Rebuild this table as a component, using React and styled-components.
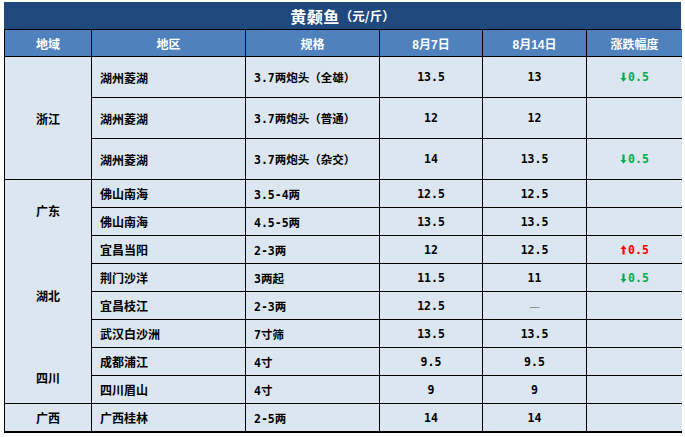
import styled, { createGlobalStyle } from "styled-components";

const GlobalStyle = createGlobalStyle`
  body {
    margin: 0;
    background: #fff;
    font-family: "Noto Sans CJK SC", sans-serif;
  }
`

const Page = styled.div`
  padding: 2px 0 0 4px;
`
const Title = styled.div`
  width: 677px;
  height: 27px;
  box-sizing: border-box;
  background-color: #1f497d;
  color: #fff;
  display: flex;
  align-items: center;
  justify-content: center;
  font-weight: bold;
  font-size: 16px;
  letter-spacing: 0.5px;
`
const Unit = styled.span`
  font-size: 12.5px;
  letter-spacing: 0;
`
const Table = styled.div`
  width: 677px;
  box-sizing: border-box;
  border-left: 1px solid #000;
  display: grid;
  grid-template-columns: 87px 154px 134px 103px 104px 95px;
  grid-template-rows: 28px 41px 41px 41px repeat(8, 28px) 29px;
`
const Head = styled.div`
  background-color: #4f81bd;
  color: #fff;
  font-family: "Liberation Sans", "Noto Sans CJK SC", sans-serif;
  font-weight: bold;
  font-size: 12px;
  display: flex;
  align-items: center;
  justify-content: center;
  border-top: 1px solid #000;
  border-bottom: 1px solid #000;
  border-right: ${p => (p.$last ? "none" : "1px solid #000")};
  padding-top: 1px;
`
const Cell = styled.div`
  background-color: #dce6f1;
  color: ${p => p.$color || "#000"};
  font-family: "DejaVu Sans Mono", "Noto Sans CJK SC", monospace;
  font-weight: bold;
  font-size: 11.5px;
  display: flex;
  align-items: center;
  justify-content: ${p => (p.$left ? "flex-start" : "center")};
  padding-left: ${p => (p.$left ? "8px" : "0")};
  grid-row: ${p => (p.$span ? `span ${p.$span}` : "auto")};
  border-right: ${p => (p.$last ? "none" : "1px solid #000")};
  border-bottom: ${p => (p.$open ? "none" : p.$end ? "2px solid #000" : "1px solid #000")};
  white-space: nowrap;
`
const Region = styled(Cell)`
  font-family: "Noto Sans CJK SC", sans-serif;
  font-size: 12px;
  padding-top: ${p => p.$pad || "0"};
`
const Name = styled.span`
  font-family: "Noto Sans CJK SC", sans-serif;
  font-size: 12px;
`
const Dash = styled.span`
  font-family: "Noto Sans CJK SC", sans-serif;
  font-weight: normal;
  color: #7f7f7f;
  font-size: 12px;
`
const Change = styled.span`
  display: inline-flex;
  align-items: center;
  gap: 1px;
`

const heads = ["地域", "地区", "规格", "8月7日", "8月14日", "涨跌幅度"];

const rows = [
  { region: "浙江", span: 3, place: "湖州菱湖", spec: "3.7两炮头（全雄）", a: "13.5", b: "13", diff: "down" },
  { place: "湖州菱湖", spec: "3.7两炮头（普通）", a: "12", b: "12" },
  { place: "湖州菱湖", spec: "3.7两炮头（杂交）", a: "14", b: "13.5", diff: "down" },
  { region: "广东", span: 2, open: true, pad: "4px", place: "佛山南海", spec: "3.5-4两", a: "12.5", b: "12.5" },
  { place: "佛山南海", spec: "4.5-5两", a: "13.5", b: "13.5" },
  { region: "湖北", span: 4, open: true, pad: "6px", place: "宜昌当阳", spec: "2-3两", a: "12", b: "12.5", diff: "up" },
  { place: "荆门沙洋", spec: "3两起", a: "11.5", b: "11", diff: "down" },
  { place: "宜昌枝江", spec: "2-3两", a: "12.5", b: null },
  { place: "武汉白沙洲", spec: "7寸筛", a: "13.5", b: "13.5" },
  { region: "四川", span: 2, pad: "4px", place: "成都浦江", spec: "4寸", a: "9.5", b: "9.5" },
  { place: "四川眉山", spec: "4寸", a: "9", b: "9" },
  { region: "广西", span: 1, place: "广西桂林", spec: "2-5两", a: "14", b: "14", end: true },
];

// thick arrow, like the one Excel draws for up/down
function Arrow({ up }) {
  return (
    <svg width="7" height="10" viewBox="0 0 7 10">
      <path
        d="M2.4 0.5 H4.6 V6 H6.6 L3.5 9.8 L0.4 6 H2.4 Z"
        fill="currentColor"
        transform={up ? "rotate(180 3.5 5)" : undefined}
      />
    </svg>
  );
}

function Diff({ kind }) {
  if (!kind) return null;
  return (
    <Change>
      <Arrow up={kind === "up"} />
      0.5
    </Change>
  );
}

function App() {
  return (
    <Page>
      <GlobalStyle />
      <Title>
        黄颡鱼<Unit>（元/斤）</Unit>
      </Title>
      <Table>
        {heads.map((h, i) => (
          <Head key={h} $last={i === heads.length - 1}>{h}</Head>
        ))}
        {rows.map((r, i) => [
          r.region && (
            <Region key={`r${i}`} $span={r.span} $open={r.open} $pad={r.pad} $end={r.end}>
              {r.region}
            </Region>
          ),
          <Cell key={`p${i}`} $left $end={r.end}><Name>{r.place}</Name></Cell>,
          <Cell key={`s${i}`} $left $end={r.end}>{r.spec}</Cell>,
          <Cell key={`a${i}`} $end={r.end}>{r.a}</Cell>,
          <Cell key={`b${i}`} $end={r.end}>{r.b === null ? <Dash>—</Dash> : r.b}</Cell>,
          <Cell
            key={`d${i}`}
            $last
            $end={r.end}
            $color={r.diff === "up" ? "#ff0000" : "#00b050"}
          >
            <Diff kind={r.diff} />
          </Cell>,
        ])}
      </Table>
    </Page>
  );
}

export default App;
